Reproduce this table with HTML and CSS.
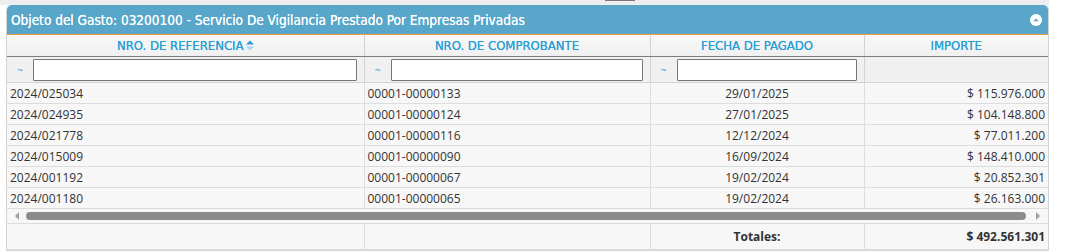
FILE: index.html
```html
<!DOCTYPE html>
<html lang="es">
<head>
<meta charset="utf-8">
<link rel="stylesheet" href="styles.css">
</head>
<body>
<div class="topstrip"><div class="topstrip-bar"></div></div>
<div class="panel">
  <div class="panel-header">
    <span class="panel-title">Objeto del Gasto: 03200100 - Servicio De Vigilancia Prestado Por Empresas Privadas</span>
    <span class="collapse-btn"><svg width="12" height="12" viewBox="0 0 12 12"><circle cx="6" cy="6" r="6" fill="#fff"/><path d="M3.2 7.3 L6 4.4 L8.8 7.3 Z" fill="#58a7cb"/></svg></span>
  </div>
  <table class="grid">
    <colgroup>
      <col class="c1"><col class="c2"><col class="c3"><col class="c4">
    </colgroup>
    <thead>
      <tr class="head-row">
        <th>NRO. DE REFERENCIA<svg class="sort" width="8" height="11" viewBox="0 0 8 11"><path d="M0 4.5 L4 0.5 L8 4.5 Z" fill="#2a9fd6"/><path d="M0 6.5 L4 10.5 L8 6.5 Z" fill="#a8d3ea"/></svg></th>
        <th>NRO. DE COMPROBANTE</th>
        <th>FECHA DE PAGADO</th>
        <th>IMPORTE</th>
      </tr>
      <tr class="filter-row">
        <td><div class="filter"><span class="tilde">~</span><input type="text" class="finput"></div></td>
        <td><div class="filter"><span class="tilde">~</span><input type="text" class="finput"></div></td>
        <td><div class="filter"><span class="tilde">~</span><input type="text" class="finput"></div></td>
        <td></td>
      </tr>
    </thead>
    <tbody>
      <tr><td>2024/025034</td><td>00001-00000133</td><td class="ctr">29/01/2025</td><td class="num">$ 115.976.000</td></tr>
      <tr><td>2024/024935</td><td>00001-00000124</td><td class="ctr">27/01/2025</td><td class="num">$ 104.148.800</td></tr>
      <tr><td>2024/021778</td><td>00001-00000116</td><td class="ctr">12/12/2024</td><td class="num">$ 77.011.200</td></tr>
      <tr><td>2024/015009</td><td>00001-00000090</td><td class="ctr">16/09/2024</td><td class="num">$ 148.410.000</td></tr>
      <tr><td>2024/001192</td><td>00001-00000067</td><td class="ctr">19/02/2024</td><td class="num">$ 20.852.301</td></tr>
      <tr><td>2024/001180</td><td>00001-00000065</td><td class="ctr">19/02/2024</td><td class="num">$ 26.163.000</td></tr>
      <tr class="scroll-row">
        <td colspan="4">
          <div class="hscroll">
            <span class="arrow-left"></span>
            <div class="thumb"></div>
            <span class="arrow-right"></span>
          </div>
        </td>
      </tr>
    </tbody>
    <tfoot>
      <tr class="total-row"><td></td><td></td><td class="ctr">Totales:</td><td class="num">$ 492.561.301</td></tr>
    </tfoot>
  </table>
</div>
</body>
</html>
```

FILE: styles.css
```css
html, body {
  margin: 0;
  padding: 0;
  background: #ffffff;
}
body {
  font-family: "Open Sans", "DejaVu Sans", sans-serif;
  color: #333;
}
.topstrip {
  width: 1049px;
  height: 5px;
  background: #eeeeee;
}
.topstrip-bar {
  margin-left: 605px;
  width: 30px;
  height: 1px;
  background: #777;
}
.panel {
  margin-left: 6px;
  width: 1041px;
  border: 1px solid #d3d3d3;
  border-top: none;
  border-radius: 5px 5px 0 0;
  background: #f7f7f7;
}
.panel-header {
  height: 29px;
  background: #58a7cb;
  border-bottom: 1px solid #eea236;
  border-radius: 5px 5px 0 0;
  display: flex;
  align-items: center;
  justify-content: space-between;
  padding: 0 6px 0 4px;
}
.panel-title {
  color: #fff;
  font-family: "DejaVu Sans Condensed", "DejaVu Sans", sans-serif;
  font-size: 13.5px;
  font-weight: normal;
  text-shadow: 0 0 0.5px #fff;
}
.collapse-btn {
  display: flex;
}
.grid {
  width: 1041px;
  table-layout: fixed;
  border-collapse: collapse;
  font-size: 12px;
}
.c1 { width: 357px; }
.c2 { width: 286px; }
.c3 { width: 214px; }
.c4 { width: 184px; }
.head-row th {
  height: 21px;
  padding: 0;
  font-family: "DejaVu Sans Condensed", "DejaVu Sans", sans-serif;
  font-weight: normal;
  font-size: 13px;
  color: #2a9fd6;
  text-shadow: 0 0 0.3px #2a9fd6;
  background: linear-gradient(#f8f8f8, #f0f0f0);
  border-left: 1px solid #d3d3d3;
  border-bottom: 1px solid #7d7d7d;
  text-align: center;
}
.head-row th:first-child { border-left: none; }
.sort {
  vertical-align: -1px;
  margin-left: 2px;
}
.filter-row td {
  height: 25px;
  padding: 0;
  background: #f0f0f0;
  border-left: 1px solid #d3d3d3;
  border-bottom: 1px solid #d3d3d3;
}
.filter-row td:first-child { border-left: none; }
.filter {
  display: flex;
  align-items: center;
  padding: 0 7px 0 0;
}
.tilde {
  flex: 0 0 26px;
  text-align: center;
  color: #2a9fd6;
  font-size: 10px;
}
.finput {
  flex: 1 1 auto;
  min-width: 0;
  width: 10px;
  height: 22px;
  box-sizing: border-box;
  margin: 0;
  border: 1px solid #767676;
  border-radius: 1px;
  background: #fff;
  padding: 0 4px;
}
tbody td {
  height: 20px;
  padding: 0 3px;
  border-left: 1px solid #dddddd;
  border-bottom: 1px solid #dddddd;
  background: #f7f7f7;
  white-space: nowrap;
}
tbody td:first-child { border-left: none; }
.ctr { text-align: center; }
.num { text-align: right; }
.scroll-row td {
  height: 14px;
  padding: 0;
}
.hscroll {
  display: flex;
  align-items: center;
  height: 14px;
  padding: 0 5px;
  gap: 4px;
}
.arrow-left {
  width: 0;
  height: 0;
  border-top: 4px solid transparent;
  border-bottom: 4px solid transparent;
  border-right: 4px solid #a0a0a0;
  margin-left: 3px;
}
.arrow-right {
  width: 0;
  height: 0;
  border-top: 4px solid transparent;
  border-bottom: 4px solid transparent;
  border-left: 4px solid #a0a0a0;
  margin-right: 3px;
}
.thumb {
  flex: 1;
  height: 8px;
  margin: 0 6px 0 3px;
  background: #8b8b8b;
  border-radius: 4px;
}
.total-row td {
  height: 25px;
  padding: 0 3px;
  font-weight: bold;
  background: #f7f7f7;
  border-left: 1px solid #dddddd;
  border-bottom: 1px solid #dddddd;
}
.total-row td:first-child { border-left: none; }
```
